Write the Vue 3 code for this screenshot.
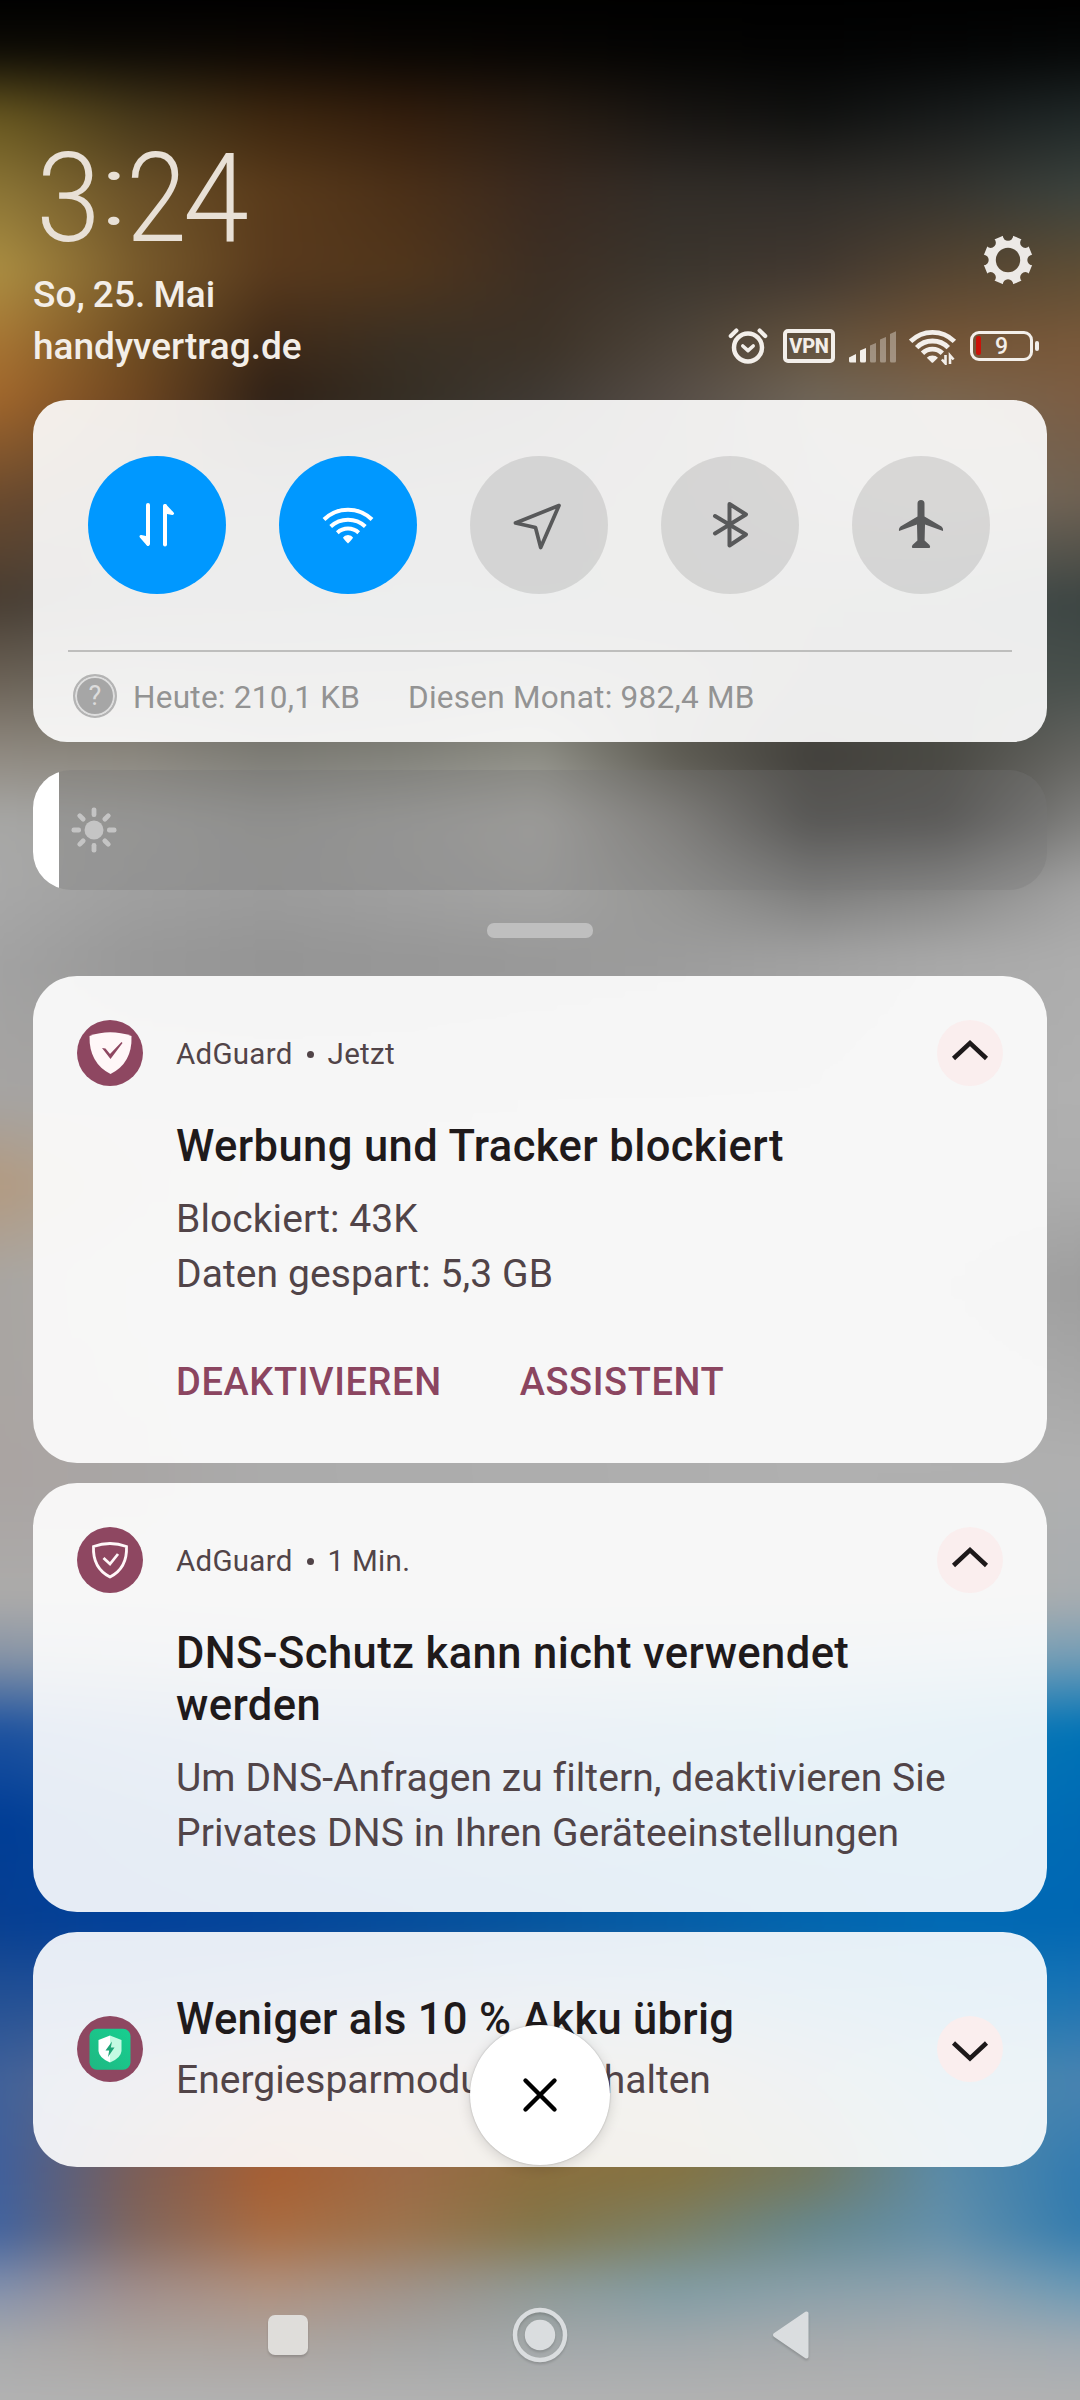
<script setup>
const wallpaper = [
  [0, ['#000', '#000', '#000', '#000', '#000', '#000', '#000', '#000', '#000']],
  [50, ['#0d0b05', '#0d0a05', '#0d0804', '#090603', '#070503', '#040403', '#030303', '#040505', '#060808']],
  [115, ['#66561f', '#46381a', '#3c260f', '#321d0d', '#271c12', '#181512', '#101110', '#181b1b', '#1f2727']],
  [190, ['#8b7536', '#6b5229', '#5a3b1b', '#4b3018', '#3a2a20', '#322d28', '#302d29', '#35342f', '#3c433e']],
  [270, ['#ab8e42', '#7a5c2c', '#593a1d', '#51361c', '#3d2f24', '#3c362e', '#423830', '#554532', '#5f4e35']],
  [345, ['#a67433', '#6f4d22', '#3f2a18', '#3a3024', '#3d3328', '#4d443a', '#65543f', '#765637', '#79593a']],
  [400, ['#a0662c', '#6f4620', '#2e2016', '#352e24', '#403a34', '#574e47', '#706659', '#7a6650', '#7c5e44']],
  [500, ['#6a4a2e', '#564438', '#484440', '#484846', '#4c4b49', '#57534e', '#68625b', '#746a60', '#6f6253']],
  [600, ['#483d32', '#4b4845', '#4b4b4a', '#485050', '#4c4f4f', '#50504e', '#50504d', '#454e4c', '#3c4543']],
  [680, ['#6b6256', '#6b6861', '#65645f', '#66655f', '#6b6b65', '#605f58', '#4e4d49', '#4a4e4b', '#48504c']],
  [755, ['#908a81', '#8b877e', '#7c7b74', '#82827a', '#8e8e85', '#5c5a51', '#42403b', '#4a4943', '#666662']],
  [820, ['#a7a7a5', '#a3a3a1', '#9b9b99', '#a2a2a0', '#acaba8', '#85837f', '#4b4a47', '#504f4d', '#80807e']],
  [890, ['#a8a8a8', '#a0a0a0', '#9c9c9c', '#a0a0a0', '#a5a5a4', '#969694', '#7d7d7c', '#888887', '#a3a3a3']],
  [960, ['#a2a2a2', '#989898', '#949494', '#969696', '#989898', '#9c9c9c', '#a2a2a2', '#a9a9a9', '#adadad']],
  [1100, ['#a6a4a2', '#a6a5a4', '#a5a5a5', '#a5a5a5', '#a8a8a8', '#a8a8a8', '#a8a8a8', '#adadad', '#b0b0b0']],
  [1185, ['#b39a80', '#aea69c', '#adacab', '#adadad', '#adadad', '#adadad', '#adadad', '#adadad', '#adadad']],
  [1280, ['#a9a6a2', '#acaba9', '#adadad', '#adadad', '#adadad', '#adadad', '#adadad', '#a8a8a8', '#9e9e9e']],
  [1472, ['#aaa4a2', '#a9a6a5', '#ababab', '#acacac', '#adadad', '#aeaeae', '#b0b0b0', '#b0b0b0', '#b0b0b0']],
  [1600, ['#acabaa', '#acabaa', '#adadad', '#adadad', '#adadad', '#adadad', '#adadad', '#adadad', '#a8adb0']],
  [1660, ['#8492a6', '#8a97a8', '#8f9dab', '#8f9dab', '#8f9fac', '#8aa0b0', '#86a0b2', '#7c9fb5', '#709cb6']],
  [1730, ['#1d52a0', '#3060a0', '#3d6da6', '#3d72a8', '#3a74aa', '#307cb0', '#2880b2', '#147ab4', '#0073b6']],
  [1820, ['#003d96', '#0a4a9c', '#1656a2', '#1860a8', '#1668ac', '#1070b0', '#0875b4', '#0074b8', '#006ab4']],
  [1920, ['#063f92', '#00409a', '#00449a', '#004b9c', '#00539f', '#005ba7', '#0063ae', '#0068b4', '#0067b3']],
  [1990, ['#214f94', '#20509a', '#2c589a', '#38649c', '#40709f', '#3a74a5', '#2078ac', '#1078b4', '#1a73b4']],
  [2080, ['#41629a', '#666a88', '#8a6c6c', '#8f7666', '#907c60', '#848068', '#64808c', '#4488ac', '#4a84b0']],
  [2170, ['#40609c', '#7c5e56', '#a85e30', '#9c6a46', '#8b6e3c', '#85723f', '#74785e', '#5b8ba8', '#327bb0']],
  [2230, ['#42639e', '#80665e', '#a96c42', '#9c744e', '#83764a', '#7b8066', '#66888e', '#6390ab', '#347cae']],
  [2290, ['#8491ad', '#a08e8c', '#b0917f', '#a0938a', '#8f9a98', '#809ca4', '#8aa0aa', '#8ea2af', '#6d9ab5']],
  [2345, ['#a9aaac', '#aca5a0', '#aca49f', '#a6a6a5', '#a3a8aa', '#a3a9ac', '#a8abad', '#a9adb0', '#a2abb2']],
  [2400, ['#b2b2b2', '#b2b2b2', '#b2b2b2', '#b2b2b2', '#b2b2b2', '#b2b2b2', '#b2b2b2', '#b2b2b2', '#b2b2b2']]
]
const bleed = 40
const across = (colors) =>
  `linear-gradient(90deg, ${colors.map((c, i) => `${c} ${bleed + i * 135}px`).join(', ')})`
const bands = wallpaper.slice(1).map(([y, colors], i) => ({
  height: `${y - wallpaper[i][0]}px`,
  from: across(wallpaper[i][1]),
  to: across(colors)
}))
const rays = [0, 45, 90, 135, 180, 225, 270, 315]
</script>

<template>
  <div class="screen">
    <div class="wallpaper">
      <div v-for="(b, i) in bands" :key="i" class="band" :style="{ height: b.height, background: b.from }">
        <div class="fade" :style="{ background: b.to }"></div>
      </div>
    </div>

    <header class="top">
      <div class="left">
        <div class="clock"><span class="d3">3</span><span class="dc">:</span><span class="d2">2</span><span class="d4">4</span></div>
        <div class="date">So, 25. Mai</div>
        <div class="carrier">handyvertrag.de</div>
      </div>
      <div class="right">
        <svg class="gear" width="50" height="50" viewBox="-25 -25 50 50">
          <mask id="gearmask">
            <rect x="-25" y="-25" width="50" height="50" fill="#fff" />
            <circle r="12.2" fill="#000" />
            <circle v-for="a in rays" :key="a" cx="0" cy="-24.5" r="5.2" fill="#000" :transform="`rotate(${a})`" />
          </mask>
          <g mask="url(#gearmask)" fill="#ece9e6">
            <circle r="20.5" />
            <rect v-for="a in rays" :key="a" x="-6.8" y="-24.3" width="13.6" height="20" rx="2" :transform="`rotate(${a + 22.5})`" />
          </g>
        </svg>
        <div class="status">
          <svg width="40" height="38" viewBox="0 0 40 38" fill="none" stroke="#f3efea" stroke-linecap="round">
            <circle cx="20" cy="20.5" r="14" stroke-width="4.500" />
            <path d="M14.800 19l5.200 4.600 5.200-4.600" stroke-width="3.600" stroke-linejoin="round" />
            <path d="M2.800 9l5.600-5.400M37.200 9l-5.600-5.400" stroke-width="4.200" />
          </svg>
          <div class="vpn">VPN</div>
          <svg class="signal" width="48" height="32" viewBox="0 0 48 32" fill="#f3efea">
            <path d="M0 26.500l7-3.500v8.500h-5.500q-1.500 0-1.500-1.500z" />
            <path d="M11 19.500l6-2.500v13q0 1.500-1.500 1.500h-3q-1.500 0-1.500-1.500z" />
            <g opacity=".38">
              <path d="M21 14.500l6-2.500v18q0 1.500-1.500 1.500h-3q-1.500 0-1.500-1.500z" />
              <path d="M31 8.500l6-2.500v24q0 1.500-1.500 1.500h-3q-1.500 0-1.500-1.500z" />
              <path d="M41 3l6-2.800v29.800q0 1.500-1.500 1.500h-3q-1.500 0-1.500-1.500z" />
            </g>
          </svg>
          <svg class="wifis" width="48" height="36" viewBox="0 0 48 36" fill="none" stroke="#f3efea" stroke-width="4.800">
            <path d="M1.600 12.400a31 31 0 0 1 43.800 0" />
            <path d="M7.700 18.700a22 22 0 0 1 31.600 0" />
            <path d="M13.500 24.300a14 14 0 0 1 19.800 0" />
            <path d="M23.400 26.500q3.500 0 5.600 2.200l-4.600 4.600q-1 1-2 0l-4.600-4.600q2.100-2.200 5.600-2.200z" fill="#f3efea" stroke="none" />
            <path d="M36.500 26v8.500l-3.600-4M41 35v-8.500l3.600 4" stroke-width="2.600" />
          </svg>
          <div class="battery"><i></i><span>9</span><b></b></div>
        </div>
      </div>
    </header>

    <section class="panel">
      <div class="tiles">
        <div class="tile on">
          <svg viewBox="-69 -69 138 138" fill="none" stroke="#fff" stroke-width="4" stroke-linecap="round" stroke-linejoin="round">
            <path d="M-9 -20V18.500" /><path d="M-9 19.500L-16 11.500L-9 13z" fill="#fff" stroke-width="3" />
            <path d="M8 19.500V-19" /><path d="M8 -19.500L15.500 -11.500L8 -13z" fill="#fff" stroke-width="3" />
          </svg>
        </div>
        <div class="tile on">
          <svg viewBox="-69 -69 138 138" fill="none" stroke="#fff" stroke-width="4">
            <path d="M-24 -5.500a34.500 34.500 0 0 1 48 0M-17.300 1.500a25.500 25.500 0 0 1 34.600 0M-10.700 7.700a16 16 0 0 1 21.400 0" />
            <path d="M0 10q3.500 0 5 2.500q-.5 1.500-5 6q-4.500-4.500-5-6q1.500-2.500 5-2.500z" fill="#fff" stroke="none" />
          </svg>
        </div>
        <div class="tile">
          <svg viewBox="-69 -69 138 138" fill="none" stroke="#58595a" stroke-width="3.700" stroke-linejoin="round">
            <path d="M20 -19.500L-23.500 -2L-3.500 2.500L1.700 22.500z" />
          </svg>
        </div>
        <div class="tile">
          <svg viewBox="-69 -69 138 138" fill="none" stroke="#58595a" stroke-width="4" stroke-linecap="round" stroke-linejoin="round">
            <path d="M-15 -9L16 9.500L-.5 20.500V-21L16 -10.500L-15 8.500" />
          </svg>
        </div>
        <div class="tile">
          <svg viewBox="-69 -69 138 138" fill="#58595a">
            <path d="M-3.500 -21.500a3.500 3.500 0 0 1 7 0V-8.500L20.500 1.500Q22.500 3 22 6L4 -.5L3.600 15.500L8.500 20Q10 23 8 23H-8Q-10 23 -8.500 20L-3.600 15.500L-4 -.5L-22 6Q-22.500 3 -20.500 1.500L-3.500 -8.500z" />
          </svg>
        </div>
      </div>
      <div class="rule"></div>
      <div class="usage">
        <div class="help"><span>?</span></div>
        <span class="today">Heute: 210,1 KB</span>
        <span class="month">Diesen Monat: 982,4 MB</span>
      </div>
    </section>

    <div class="slider">
      <div class="level"></div>
      <svg width="48" height="48" viewBox="-24 -24 48 48" fill="#c4c4c4">
        <circle r="9.500" />
        <rect v-for="a in rays" :key="a" x="-2.400" y="-22.500" width="4.800" height="9.500" rx="2.200" :transform="`rotate(${a})`" />
      </svg>
    </div>
    <div class="handle"></div>

    <main class="list">
      <article class="card first">
        <div class="avatar">
          <svg viewBox="-33 -33 66 66">
            <path d="M-20.500 -17Q0 -24.500 21.500 -17Q22.500 10 .5 21Q-21 10 -20.500 -17z" fill="#fff7f8" />
            <path d="M-8 -5L-4.500 -4.500L0 1L11.500 -11L12.500 -10L.5 6z" fill="#8e4761" />
          </svg>
        </div>
        <div class="body">
          <div class="meta">AdGuard<i class="dot"></i>Jetzt</div>
          <h2>Werbung und Tracker blockiert</h2>
          <p>Blockiert: 43K<br />Daten gespart: 5,3 GB</p>
          <div class="actions"><span>DEAKTIVIEREN</span><span>ASSISTENT</span></div>
        </div>
        <div class="toggle"><svg viewBox="-33 -33 66 66"><path d="M-16.500 5.500L0 -10L16.500 5.500" /></svg></div>
      </article>

      <article class="card second">
        <div class="avatar">
          <svg viewBox="-33 -33 66 66" fill="none" stroke="#fff7f8" stroke-width="2.800">
            <path d="M-16.500 -13.500Q0 -19.500 16.500 -13.500Q17.500 8 0 17Q-17.500 8 -16.500 -13.500z" />
            <path d="M-6.500 -2L0 4L8 -6" />
          </svg>
        </div>
        <div class="body">
          <div class="meta">AdGuard<i class="dot"></i>1 Min.</div>
          <h2>DNS-Schutz kann nicht verwendet<br />werden</h2>
          <p>Um DNS-Anfragen zu filtern, deaktivieren Sie<br />Privates DNS in Ihren Geräteeinstellungen</p>
        </div>
        <div class="toggle"><svg viewBox="-33 -33 66 66"><path d="M-16.500 5.500L0 -10L16.500 5.500" /></svg></div>
      </article>

      <article class="card third">
        <div class="avatar">
          <svg viewBox="-33 -33 66 66">
            <defs><linearGradient id="green" x1="0" y1="1" x2="1" y2="0"><stop offset="0" stop-color="#1fb882" /><stop offset="1" stop-color="#17cf90" /></linearGradient></defs>
            <rect x="-20.500" y="-20.300" width="41" height="41" rx="7.500" fill="url(#green)" />
            <path d="M0 -13.500L-11.500 -9V2Q-11 9 0 13.500z" fill="#fff" />
            <path d="M0 -13.500L11.500 -9V2Q11 9 0 13.500z" fill="#c3fae2" />
            <path d="M2 -7.500L-4.500 1.500H-.8L-2 8L4.500 -1.500H.8z" fill="#1da577" />
          </svg>
        </div>
        <div class="body">
          <h2>Weniger als 10 % Akku übrig</h2>
          <p>Energiesparmodus einschalten</p>
        </div>
        <div class="toggle"><svg viewBox="-33 -33 66 66"><path d="M-16.500 -6L0 9.500L16.500 -6" /></svg></div>
        <div class="clear">
          <svg width="40" height="40" viewBox="-20 -20 40 40"><path d="M-14.500 -14.500L14.500 14.500M14.500 -14.500L-14.500 14.500" stroke="#000" stroke-width="4.400" stroke-linecap="round" /></svg>
        </div>
      </article>
    </main>

    <nav class="nav">
      <div class="recent"></div>
      <svg class="home" width="60" height="60" viewBox="-30 -30 60 60"><circle r="25" fill="none" stroke="#dadddf" stroke-width="4.500" /><circle r="15.200" fill="#dadddf" /></svg>
      <svg class="back" width="40" height="50" viewBox="0 0 40 50"><path d="M35.500 3.500V46.500L4 25z" fill="#dadddf" stroke="#dadddf" stroke-width="4" stroke-linejoin="round" /></svg>
    </nav>
  </div>
</template>

<style>
body { margin: 0; background: #000; }
</style>

<style scoped>
.screen { position: relative; z-index: 0; width: 1080px; height: 2400px; overflow: hidden; display: flex; flex-direction: column; font-family: Roboto, "Noto Sans", sans-serif; box-sizing: border-box; }
.screen * { box-sizing: border-box; }
.screen svg { display: block; }
.wallpaper { position: absolute; inset: 0 -40px -40px; z-index: -1; background: #b2b2b2; filter: blur(14px); }
.band { width: 100%; }
.fade { height: 100%; -webkit-mask-image: linear-gradient(transparent, #000); mask-image: linear-gradient(transparent, #000); }

.top { height: 400px; flex: none; display: flex; justify-content: space-between; padding: 0 39px 0 33px; color: #f3eee8; }
.left { padding-top: 149px; }
.clock { display: flex; height: 100px; line-height: 100px; font-size: 125px; font-weight: 300; color: #e8e0d6; }
.clock span { display: flex; justify-content: center; }
.d3 { width: 71px; transform: scaleX(.93); }
.dc { width: 18px; transform: translate(1px, -8px) scale(1.1, .8); }
.d2 { width: 69px; transform: scaleX(.87); }
.d4 { width: 50px; transform: scaleX(.95); }
.date, .carrier { height: 52px; line-height: 52px; font-size: 37px; font-weight: 500; white-space: nowrap; }
.date { margin-top: 20px; word-spacing: -1px; }
.right { display: flex; flex-direction: column; align-items: flex-end; padding-top: 235px; }
.gear { margin-right: 8px; }
.status { display: flex; align-items: flex-start; margin-top: 42px; height: 38px; }
.vpn { width: 52px; height: 34px; margin: 2px 0 0 15px; border: 4px solid #f3efea; border-radius: 5px; font-size: 20px; font-weight: 800; line-height: 27px; text-align: center; letter-spacing: -.3px; }
.signal { margin: 4px 0 0 14px; }
.wifis { margin: 2px 0 0 12px; }
.battery { position: relative; width: 63px; height: 30px; margin: 4px 8px 0 13px; border: 3.500px solid #f3efea; border-radius: 9px; text-align: center; font-size: 23px; font-weight: 500; line-height: 25px; }
.battery i { position: absolute; left: 3px; top: 2px; width: 5px; height: 19px; border-radius: 2px; background: #cb1208; }
.battery b { position: absolute; right: -9px; top: 7px; width: 4px; height: 10px; border-radius: 2px; background: #f3efea; }

.panel { flex: none; width: 1014px; height: 342px; margin-left: 33px; padding-top: 56px; border-radius: 34px; background: rgba(255, 255, 255, .9); }
.tiles { display: flex; gap: 53px; padding-left: 55px; }
.tile { width: 138px; height: 138px; border-radius: 50%; background: rgba(0, 0, 0, .1); }
.tile.on { background: #0098ff; }
.rule { width: 944px; height: 2px; margin: 56px 0 0 35px; background: #bebebd; }
.usage { display: flex; align-items: center; height: 88px; padding-left: 40px; color: #939393; font-size: 31.500px; letter-spacing: .26px; white-space: nowrap; }
.help { display: flex; align-items: center; justify-content: center; width: 44px; height: 44px; border: 2px solid #b4b4b4; border-radius: 50%; background: #a6a6a6; box-shadow: inset 0 0 0 2px #dedede; color: #dcdcdc; font-size: 27px; }
.today { margin: 2px 0 0 16px; width: 224px; }
.month { margin: 2px 0 0 51px; }

.slider { flex: none; display: flex; align-items: center; width: 1014px; height: 120px; margin: 28px 0 0 33px; border-radius: 38px; overflow: hidden; background: rgba(120, 120, 120, .3); }
.level { width: 26px; height: 120px; background: #fff; }
.slider svg { margin-left: 10.500px; }
.handle { flex: none; width: 106px; height: 15px; margin: 33px 0 0 487px; border-radius: 7px; background: #bfbfbf; }

.list { flex: none; margin: 38px 0 0 33px; width: 1014px; }
.card { position: relative; display: flex; padding: 44px 44px 0; border-radius: 44px; background: rgba(255, 255, 255, .9); }
.first { height: 487px; margin-bottom: 20px; }
.second { height: 429px; margin-bottom: 20px; }
.third { height: 235px; padding-top: 84px; }
.third .body { margin-top: -23px; }
.avatar, .toggle { flex: none; width: 66px; height: 66px; border-radius: 50%; }
.avatar { background: #8e4761; }
.toggle { background: #faeeee; }
.toggle path { fill: none; stroke: #1d191a; stroke-width: 4.500; }
.body { flex: 1; min-width: 0; margin-left: 33px; white-space: nowrap; }
.meta { display: flex; align-items: center; height: 66px; line-height: 66px; padding-top: 2px; font-size: 29.500px; letter-spacing: .28px; color: #514448; }
.dot { width: 7px; height: 7px; margin: 0 14px; border-radius: 50%; background: #514448; }
h2 { margin: 35px 0 0; font-size: 43.500px; line-height: 52px; font-weight: 500; letter-spacing: .42px; color: #1f1a1b; }
p { margin: 19px 0 0; font-size: 39px; line-height: 55px; letter-spacing: .08px; color: #514448; }
.third h2 { margin-top: 1px; letter-spacing: .3px; }
.third p { margin-top: 7px; letter-spacing: 0; }
.actions { display: flex; gap: 78px; margin-top: 55px; line-height: 50px; font-size: 38px; font-weight: 500; letter-spacing: .6px; color: #8b4560; }
.clear { position: absolute; left: 437px; top: 93px; width: 140px; height: 140px; border-radius: 50%; background: #fff; display: flex; align-items: center; justify-content: center; box-shadow: 0 3px 14px rgba(0, 0, 0, .14), 0 0 2px rgba(0, 0, 0, .25); }

.nav { flex: none; display: flex; align-items: center; height: 60px; margin-top: 138px; filter: drop-shadow(0 2px 1px rgba(0, 0, 0, .15)); }
.recent { width: 40px; height: 40px; margin-left: 268px; border-radius: 7px; background: #dfddda; }
.home { margin-left: 202px; }
.back { margin-left: 201px; }
</style>
